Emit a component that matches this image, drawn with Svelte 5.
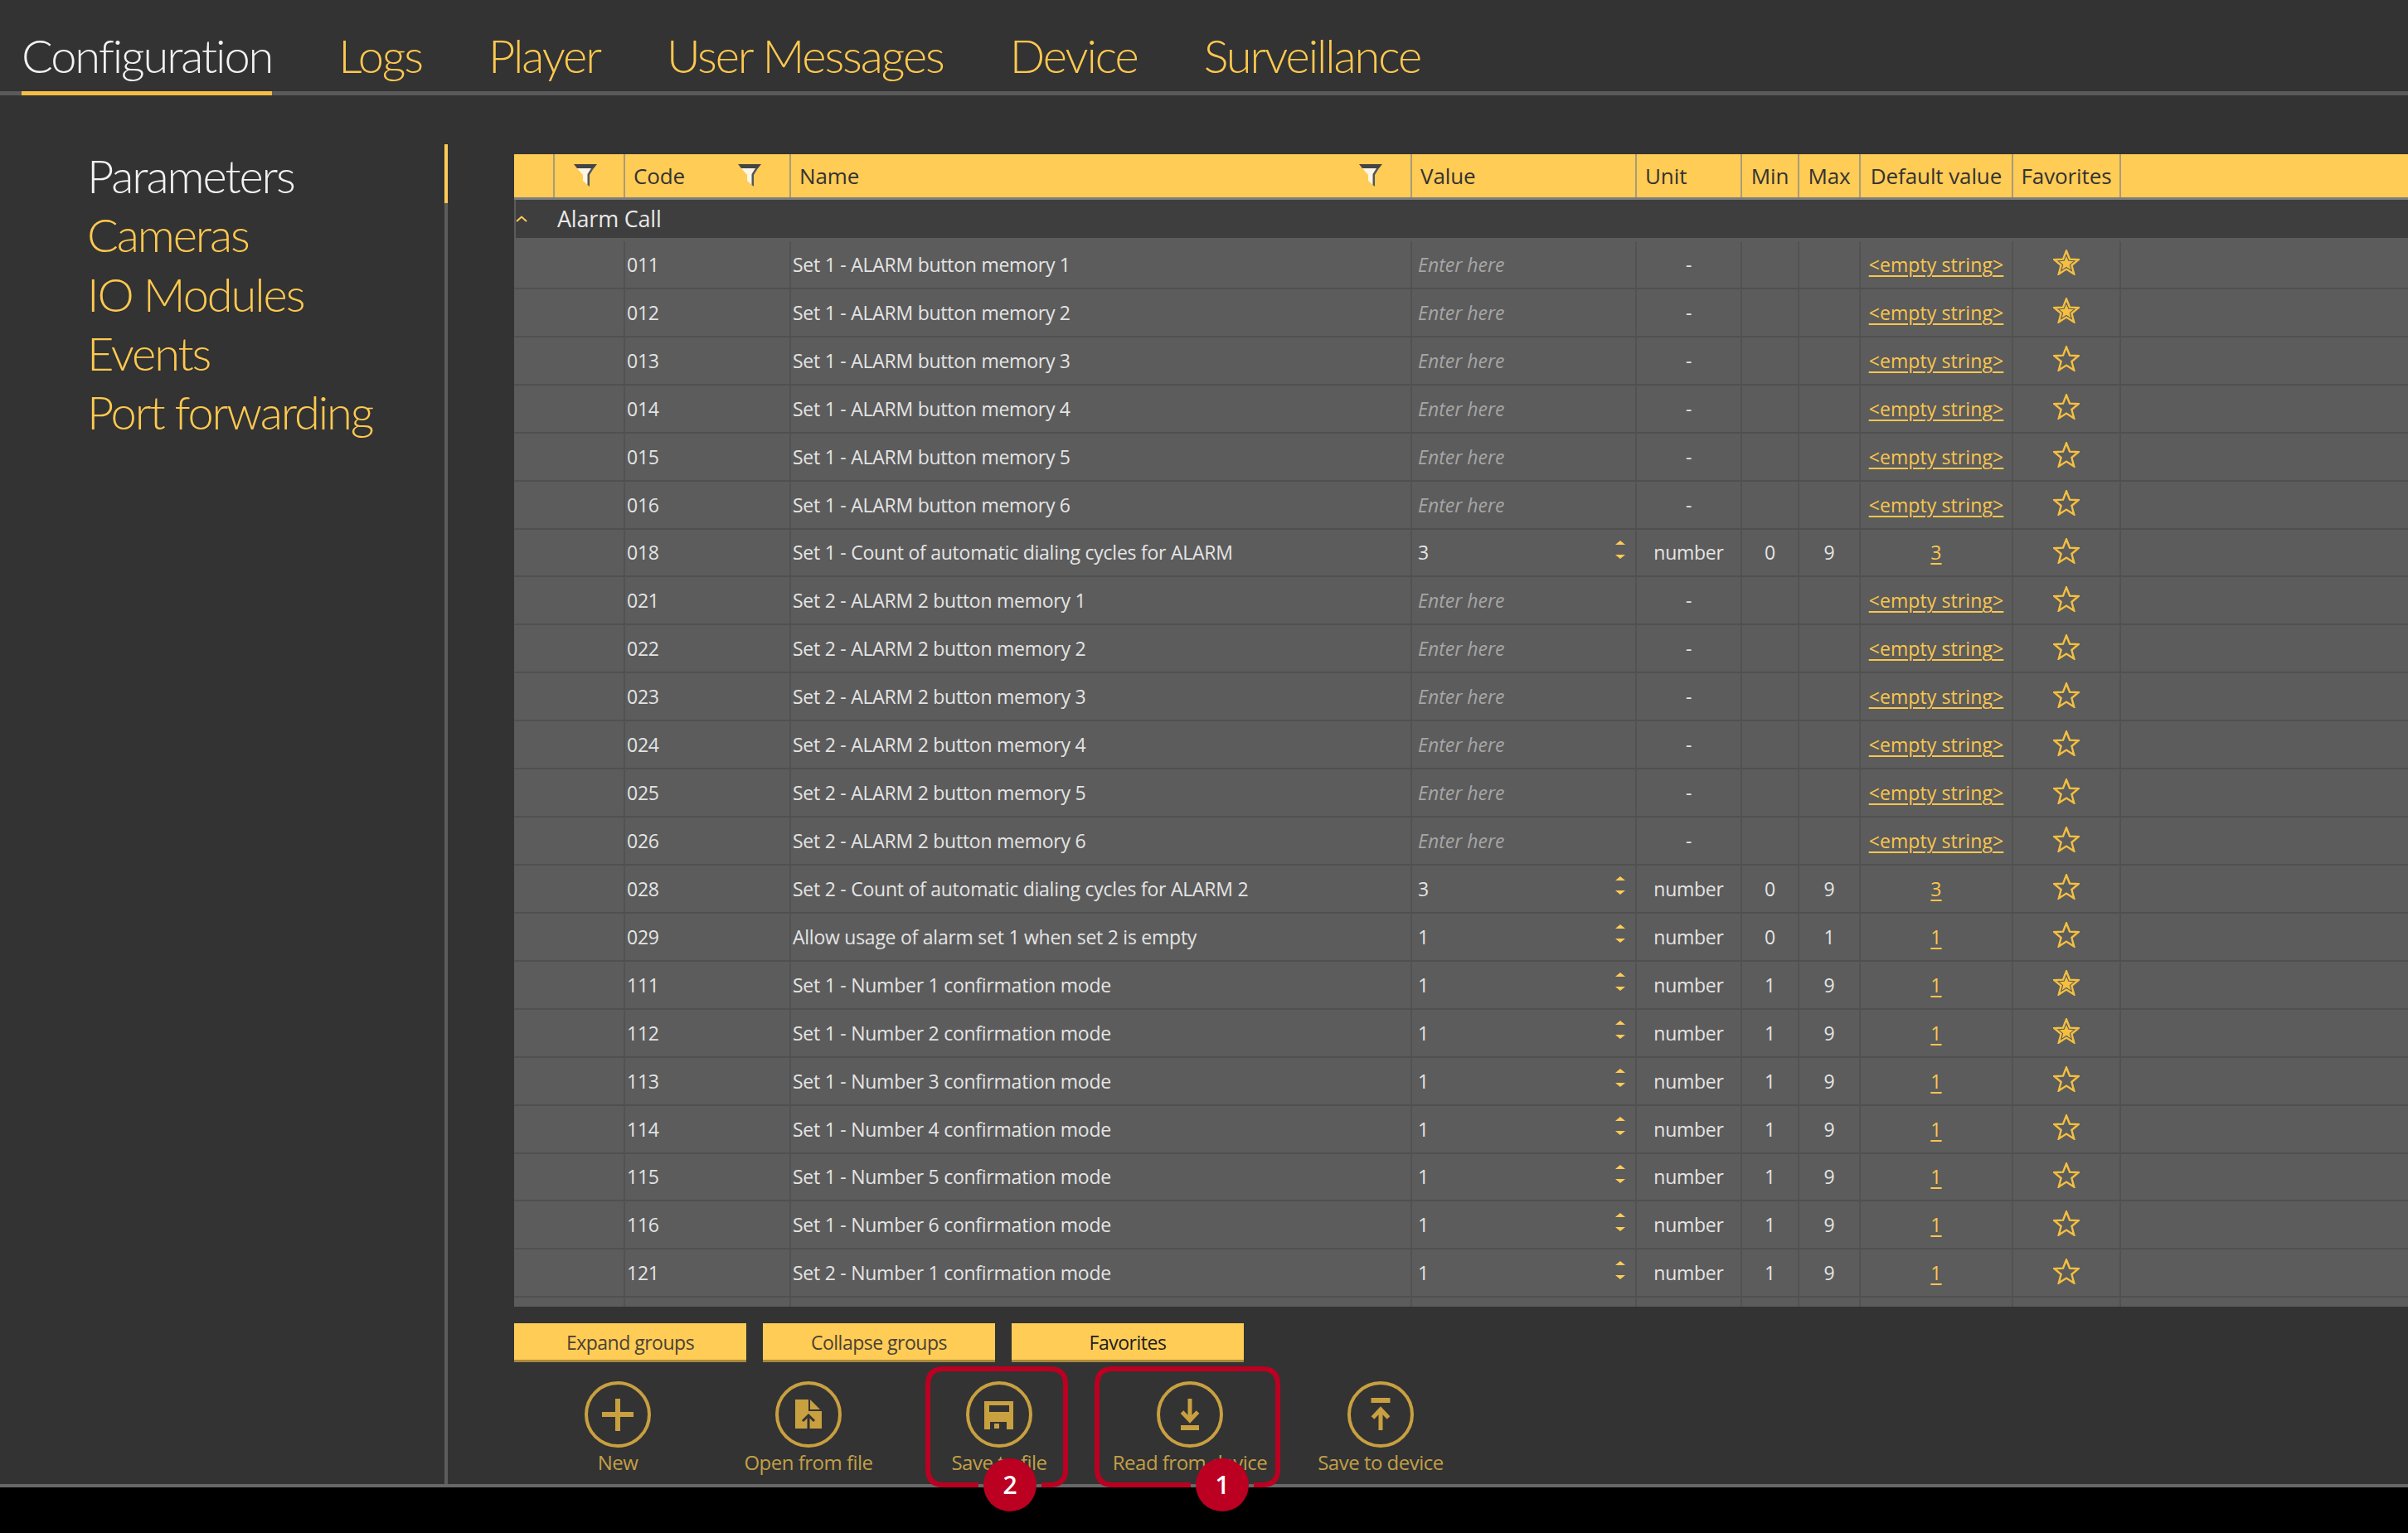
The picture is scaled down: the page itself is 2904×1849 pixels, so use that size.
<script lang="ts">
  const tabs = ['Configuration', 'Logs', 'Player', 'User Messages', 'Device', 'Surveillance'];
  const sideItems = ['Parameters', 'Cameras', 'IO Modules', 'Events', 'Port forwarding'];

  type Row = { code: string; name: string; value?: string; unit: string; min?: string; max?: string; def: string; fav?: boolean };

  const textRow = (code: string, name: string, fav = false): Row =>
    ({ code, name, unit: '-', def: '<empty string>', fav });
  const numRow = (code: string, name: string, value: string, min: string, max: string, fav = false): Row =>
    ({ code, name, value, unit: 'number', min, max, def: value, fav });

  const rows: Row[] = [
    textRow('011', 'Set 1 - ALARM button memory 1', true),
    textRow('012', 'Set 1 - ALARM button memory 2', true),
    textRow('013', 'Set 1 - ALARM button memory 3'),
    textRow('014', 'Set 1 - ALARM button memory 4'),
    textRow('015', 'Set 1 - ALARM button memory 5'),
    textRow('016', 'Set 1 - ALARM button memory 6'),
    numRow('018', 'Set 1 - Count of automatic dialing cycles for ALARM', '3', '0', '9'),
    textRow('021', 'Set 2 - ALARM 2 button memory 1'),
    textRow('022', 'Set 2 - ALARM 2 button memory 2'),
    textRow('023', 'Set 2 - ALARM 2 button memory 3'),
    textRow('024', 'Set 2 - ALARM 2 button memory 4'),
    textRow('025', 'Set 2 - ALARM 2 button memory 5'),
    textRow('026', 'Set 2 - ALARM 2 button memory 6'),
    numRow('028', 'Set 2 - Count of automatic dialing cycles for ALARM 2', '3', '0', '9'),
    numRow('029', 'Allow usage of alarm set 1 when set 2 is empty', '1', '0', '1'),
    numRow('111', 'Set 1 - Number 1 confirmation mode', '1', '1', '9', true),
    numRow('112', 'Set 1 - Number 2 confirmation mode', '1', '1', '9', true),
    numRow('113', 'Set 1 - Number 3 confirmation mode', '1', '1', '9'),
    numRow('114', 'Set 1 - Number 4 confirmation mode', '1', '1', '9'),
    numRow('115', 'Set 1 - Number 5 confirmation mode', '1', '1', '9'),
    numRow('116', 'Set 1 - Number 6 confirmation mode', '1', '1', '9'),
    numRow('121', 'Set 2 - Number 1 confirmation mode', '1', '1', '9')
  ];

  const starPath = 'M16 1.5 L20 11.6 L30.5 12.2 L22.4 19 L25.2 29.5 L16 23.6 L6.8 29.5 L9.6 19 L1.5 12.2 L12 11.6 Z';
</script>

{#snippet funnel()}
  <svg class="funnel" viewBox="0 0 28 28" aria-hidden="true">
    <path d="M0 0 H28 L24 5 H4 Z" fill="#444" />
    <path d="M4 5 H24 L19 13 V27 L11 20 V13 Z" fill="#fbf6e6" />
    <path d="M24 5 L19 13 V27 L16.5 25 V12 L21 5 Z" fill="#555" />
  </svg>
{/snippet}

<div class="app">
  <div class="window">
    <nav class="tabs">
      {#each tabs as tab, i}
        <div class="tab" class:active={i === 0}>{tab}</div>
      {/each}
    </nav>

    <div class="body">
      <aside class="side">
        {#each sideItems as item, i}
          <div class="side-item" class:active={i === 0}>{item}</div>
        {/each}
      </aside>

      <main class="content">
        <div class="table">
          <div class="row head">
            <div class="cell"></div>
            <div class="cell center first-filter">{@render funnel()}</div>
            <div class="cell between">Code {@render funnel()}</div>
            <div class="cell between">Name {@render funnel()}</div>
            <div class="cell">Value</div>
            <div class="cell">Unit</div>
            <div class="cell center">Min</div>
            <div class="cell center">Max</div>
            <div class="cell center">Default value</div>
            <div class="cell center">Favorites</div>
            <div></div>
          </div>

          <div class="group">
            <svg class="chevron" viewBox="0 0 14 8" aria-hidden="true">
              <path d="M1 7 L7 1.5 L13 7" fill="none" stroke="#ffcc55" stroke-width="2" />
            </svg>
            Alarm Call
          </div>

          <div class="rows">
            {#each rows as r}
              <div class="row data">
                <div class="cell blank"></div>
                <div class="cell code">{r.code}</div>
                <div class="cell name">{r.name}</div>
                <div class="cell value">
                  {#if r.value}
                    <span>{r.value}</span>
                    <span class="spin">
                      <svg viewBox="0 0 12 5" aria-hidden="true"><path d="M6 0 L12 5 H0 Z" fill="#ffcc55" /></svg>
                      <svg viewBox="0 0 12 5" aria-hidden="true"><path d="M0 0 H12 L6 5 Z" fill="#ffcc55" /></svg>
                    </span>
                  {:else}
                    <span class="placeholder">Enter here</span>
                  {/if}
                </div>
                <div class="cell center">{r.unit}</div>
                <div class="cell center">{r.min ?? ''}</div>
                <div class="cell center">{r.max ?? ''}</div>
                <div class="cell center"><span class="link">{r.def}</span></div>
                <div class="cell center">
                  <svg class="star" viewBox="0 0 32 31" aria-hidden="true">
                    <path d={starPath} fill="none" stroke="#f5c040" stroke-width="2.4" stroke-linejoin="miter" />
                    {#if r.fav}
                      <path d="M16 8 L18.4 13.8 L24.6 14.2 L19.8 18.2 L21.4 24.4 L16 20.8 L10.6 24.4 L12.2 18.2 L7.4 14.2 L13.6 13.8 Z" fill="#f5c040" />
                    {/if}
                  </svg>
                </div>
                <div></div>
              </div>
            {/each}
            <div class="row data">
              <div class="cell blank"></div>
              <div class="cell"></div>
              <div class="cell"></div>
              <div class="cell"></div>
              <div class="cell"></div>
              <div class="cell"></div>
              <div class="cell"></div>
              <div class="cell"></div>
              <div class="cell"></div>
              <div></div>
            </div>
          </div>
        </div>

        <div class="quick">
          <button>Expand groups</button>
          <button>Collapse groups</button>
          <button class="strong">Favorites</button>
        </div>

        <div class="toolbar">
          <div class="tool">
            <svg viewBox="0 0 80 80" aria-hidden="true">
              <circle cx="40" cy="40" r="38" />
              <path class="solid" d="M37 21 H43 V37 H59 V43 H43 V60 H37 V43 H21 V37 H37 Z" />
            </svg>
            <span>New</span>
          </div>
          <div class="tool">
            <svg viewBox="0 0 80 80" aria-hidden="true">
              <circle cx="40" cy="40" r="38" />
              <path class="solid" d="M24 22 H40 V36 H56 V57 H24 Z" />
              <path class="solid" d="M42 22 L54 34 H42 Z" />
              <path class="cut" d="M40 57 V41 M33 48 L40 41 L47 48" />
            </svg>
            <span>Open from file</span>
          </div>
          <div class="tool">
            <svg viewBox="0 0 80 80" aria-hidden="true">
              <circle cx="40" cy="40" r="38" />
              <path class="solid" fill-rule="evenodd" d="M22 24 H57 V58 H49 V49 H29 V58 H22 Z M28 29 V37 H52 V29 Z" />
              <rect class="solid" x="34" y="51" width="6" height="6" />
            </svg>
            <span>Save to file</span>
          </div>
          <div class="tool">
            <svg viewBox="0 0 80 80" aria-hidden="true">
              <circle cx="40" cy="40" r="38" />
              <path class="line" d="M40 21 V47 M30.5 37 L40 47 L49.5 37" />
              <rect class="solid" x="29" y="53" width="22" height="6" />
            </svg>
            <span>Read from device</span>
          </div>
          <div class="tool">
            <svg viewBox="0 0 80 80" aria-hidden="true">
              <circle cx="40" cy="40" r="38" />
              <rect class="solid" x="28.5" y="20" width="23" height="6" />
              <path class="line" d="M40 59 V34 M30.5 44 L40 34 L49.5 44" />
            </svg>
            <span>Save to device</span>
          </div>
        </div>
      </main>
    </div>
  </div>
  <div class="statusbar"></div>

  <svg class="marks" viewBox="0 0 2904 1849" aria-hidden="true">
    <path d="M1180 1791 H1138 Q1119 1791 1119 1772 V1670 Q1119 1651 1138 1651 H1266 Q1285 1651 1285 1670 V1772 Q1285 1791 1266 1791 H1256" />
    <path d="M1436 1791 H1342 Q1323 1791 1323 1772 V1670 Q1323 1651 1342 1651 H1522 Q1541 1651 1541 1670 V1772 Q1541 1791 1522 1791 H1512" />
  </svg>
  <div class="badge" style="left: 1186px">2</div>
  <div class="badge" style="left: 1442px">1</div>
</div>

<style>
  :global(body) {
    margin: 0;
    background: #000;
  }

  .app {
    position: relative;
    width: 2904px;
    height: 1849px;
    overflow: hidden;
    font-family: "Open Sans", "Liberation Sans", sans-serif;
    background: #000;
  }

  .window {
    height: 1790px;
    background: #333;
    display: flex;
    flex-direction: column;
  }

  .statusbar {
    height: 4px;
    background: #686868;
  }

  .tabs {
    height: 115px;
    box-sizing: border-box;
    padding-left: 26px;
    display: flex;
    gap: 80px;
    align-items: flex-end;
    border-bottom: 5px solid #5a5a5a;
  }

  .tab {
    font-family: Lato, "Open Sans", sans-serif;
    font-weight: 300;
    font-size: 56px;
    letter-spacing: -2.1px;
    line-height: 76px;
    color: #ffc94f;
    margin-bottom: -5px;
    border-bottom: 5px solid transparent;
    padding-bottom: 5px;
  }

  .tab.active {
    color: #f2f2f2;
    border-bottom-color: #f5bd45;
  }

  .body {
    flex: 1;
    display: flex;
    min-height: 0;
  }

  .side {
    width: 540px;
    box-sizing: border-box;
    margin-top: 59px;
    border-right: 4px solid #5c5c5c;
    padding-left: 105px;
  }

  .side-item {
    height: 71.3px;
    line-height: 76px;
    font-family: Lato, "Open Sans", sans-serif;
    font-weight: 300;
    font-size: 56px;
    letter-spacing: -2.1px;
    color: #ffc94f;
    margin-right: -4px;
    border-right: 4px solid transparent;
    white-space: nowrap;
  }

  .side-item.active {
    color: #f2f2f2;
    border-right-color: #ffcc55;
  }

  .content {
    flex: 1;
    min-width: 0;
    padding: 71px 0 0 80px;
  }

  .table {
    height: 1390px;
    overflow: hidden;
    background: #5c5c5c;
  }

  .row {
    display: grid;
    grid-template-columns: 49px 85px 200px 749px 271px 127px 69px 74px 184px 130px 1fr;
  }

  .cell {
    box-sizing: border-box;
    display: flex;
    align-items: center;
    min-width: 0;
    white-space: nowrap;
  }

  .center {
    justify-content: center;
  }

  .between {
    justify-content: space-between;
  }

  .head {
    height: 55px;
    box-sizing: border-box;
    background: #ffcc55;
    border-bottom: 3px solid #7d7d7d;
    color: #333;
    font-size: 26px;
    letter-spacing: -0.1px;
  }

  .head .cell {
    border-right: 2px solid #a89c7c;
    padding-left: 10px;
  }

  .head .cell.center {
    padding: 0;
  }

  .head .cell.first-filter {
    padding-right: 10px;
  }

  .head .cell.between {
    padding-right: 34px;
  }

  .funnel {
    width: 28px;
    height: 28px;
    flex: none;
  }

  .group {
    height: 46px;
    box-sizing: border-box;
    background: #3e3e3e;
    border-left: 2px solid #5c5c5c;
    color: #e8e8e8;
    font-size: 27px;
    letter-spacing: -0.2px;
    line-height: 46px;
    padding-left: 50px;
    position: relative;
  }

  .chevron {
    position: absolute;
    left: 0;
    top: 19px;
    width: 14px;
    height: 8px;
  }

  .rows {
    padding-top: 4px;
  }

  .data {
    height: 57.93px;
    box-sizing: border-box;
    border-bottom: 2px solid #505050;
    color: #e4e4e4;
    font-size: 23px;
    letter-spacing: -0.25px;
  }

  .data .cell {
    border-right: 2px solid #525252;
  }

  .blank {
    grid-column: span 2;
  }

  .code {
    padding-left: 2px;
  }

  .name {
    padding-left: 2px;
  }

  .value {
    padding: 0 12px 0 7px;
    justify-content: space-between;
  }

  .placeholder {
    font-style: italic;
    color: #a6a6a6;
    letter-spacing: 0;
  }

  .spin {
    display: flex;
    flex-direction: column;
    gap: 12px;
    margin-bottom: 7px;
  }

  .spin svg {
    display: block;
    width: 12px;
    height: 5px;
  }

  .link {
    color: #f9c64e;
    letter-spacing: 0.1px;
    text-decoration: underline;
    text-decoration-thickness: 2px;
    text-underline-offset: 4px;
  }

  .star {
    width: 32px;
    height: 31px;
    margin-bottom: 4px;
  }

  .quick {
    display: flex;
    gap: 20px;
    margin-top: 20px;
  }

  .quick button {
    width: 280px;
    height: 47px;
    border: 0;
    border-bottom: 3px solid #a8893f;
    border-radius: 0;
    padding: 2px 0 0;
    background: #ffcc55;
    color: #4a4236;
    font: 400 23px "Open Sans", sans-serif;
    letter-spacing: -0.5px;
  }

  .quick button.strong {
    color: #1e1e1e;
  }

  .toolbar {
    display: flex;
    padding: 23px 0 0 10px;
  }

  .tool {
    width: 230px;
    display: flex;
    flex-direction: column;
    align-items: center;
    gap: 1px;
    color: #c29f47;
    font-size: 24px;
    letter-spacing: -0.5px;
    white-space: nowrap;
  }

  .tool svg {
    width: 80px;
    height: 80px;
    display: block;
  }

  .tool circle {
    fill: none;
    stroke: #c9a040;
    stroke-width: 4;
  }

  .tool .solid {
    fill: #c9a040;
  }

  .tool .line {
    fill: none;
    stroke: #c9a040;
    stroke-width: 5;
  }

  .tool .cut {
    fill: none;
    stroke: #333;
    stroke-width: 3;
  }

  .marks {
    position: absolute;
    inset: 0;
    width: 2904px;
    height: 1849px;
    pointer-events: none;
  }

  .marks path {
    fill: none;
    stroke: #bb0022;
    stroke-width: 6;
  }

  .badge {
    position: absolute;
    top: 1759px;
    width: 64px;
    height: 64px;
    border-radius: 50%;
    background: #bb0022;
    color: #fff;
    font-size: 30px;
    font-weight: 600;
    line-height: 64px;
    text-align: center;
  }
</style>
